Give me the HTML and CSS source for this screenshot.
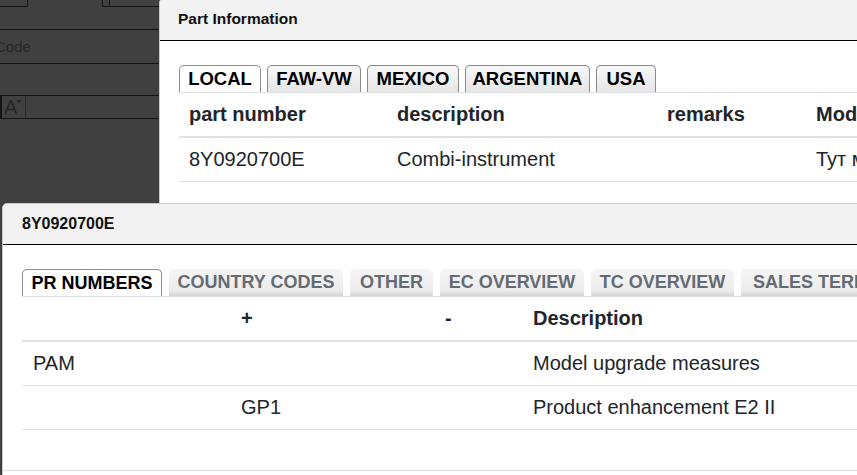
FILE: index.html
```html
<!DOCTYPE html>
<html lang="en">
<head>
<meta charset="utf-8">
<title>Part Information</title>
<link rel="stylesheet" href="styles.css">
</head>
<body>
<div class="backdrop">
  <div class="bg-top">
    <span class="bg-box bg-box-a"></span>
    <span class="bg-box bg-box-b"></span>
    <span class="bg-box bg-box-c"></span>
  </div>
  <div class="bg-row bg-row-code"><span class="bg-label">Code</span></div>
  <div class="bg-row bg-row-empty"></div>
  <div class="bg-row bg-row-tools"><span class="bg-tool">A<span class="bg-caret"></span></span></div>
</div>

<section class="dialog dialog-part">
  <header class="dialog-header"><h1 class="dialog-title">Part Information</h1></header>
  <div class="dialog-body">
    <nav class="tabs tabs-classic">
      <span class="tab tab-active w-local">LOCAL</span>
      <span class="tab w-faw">FAW-VW</span>
      <span class="tab w-mexico">MEXICO</span>
      <span class="tab w-argentina">ARGENTINA</span>
      <span class="tab w-usa">USA</span>
    </nav>
    <div class="grid-table part-table">
      <div class="trow thead">
        <span>part number</span><span>description</span><span>remarks</span><span>Model</span>
      </div>
      <div class="trow">
        <span>8Y0920700E</span><span>Combi-instrument</span><span></span><span>Тут модель</span>
      </div>
    </div>
  </div>
</section>

<section class="dialog dialog-pr">
  <header class="dialog-header"><h1 class="dialog-title">8Y0920700E</h1></header>
  <div class="dialog-body">
    <nav class="tabs tabs-flat">
      <span class="tab tab-active w-pr">PR NUMBERS</span>
      <span class="tab w-country">COUNTRY CODES</span>
      <span class="tab w-other">OTHER</span>
      <span class="tab w-ec">EC OVERVIEW</span>
      <span class="tab w-tc">TC OVERVIEW</span>
      <span class="tab w-sales">SALES TERMS</span>
    </nav>
    <div class="grid-table pr-table">
      <div class="trow thead">
        <span></span><span>+</span><span>-</span><span>Description</span>
      </div>
      <div class="trow">
        <span>PAM</span><span></span><span></span><span>Model upgrade measures</span>
      </div>
      <div class="trow">
        <span></span><span>GP1</span><span></span><span>Product enhancement E2 II</span>
      </div>
    </div>
  </div>
  <footer class="dialog-footer"></footer>
</section>
</body>
</html>
```

FILE: styles.css
```css
* { box-sizing: border-box; }

html, body {
  margin: 0;
  padding: 0;
}

body {
  width: 857px;
  height: 475px;
  overflow: hidden;
  position: relative;
  background: #404040;
  font-family: "Liberation Sans", Arial, sans-serif;
  color: #212529;
}

/* ---------- darkened page behind the dialogs ---------- */
.backdrop {
  width: 160px;
}

.bg-top {
  height: 30px;
  border-bottom: 1px solid #151515;
  display: flex;
  align-items: flex-start;
}

.bg-box {
  height: 7px;
  border: 1px solid #151515;
  border-top: none;
}

.bg-box-a {
  width: 30px;
  margin-left: -2px;
}

.bg-box-b {
  width: 8px;
  margin-left: 74px;
}

.bg-box-c {
  flex: 1;
  border-left: none;
  border-right: none;
}

.bg-row {
  border-bottom: 1px solid #151515;
  display: flex;
  align-items: center;
}

.bg-row-code { height: 34px; }
.bg-row-empty { height: 32px; }
.bg-row-tools { height: 23px; }

.bg-label {
  margin-left: -5px;
  font-size: 15px;
  color: #262626;
}

.bg-tool {
  height: 22px;
  width: 26px;
  border-left: 2px solid #151515;
  border-right: 1px solid #2a2a2a;
  position: relative;
  font-size: 20px;
  line-height: 22px;
  color: #262626;
  padding-left: 2px;
}

.bg-caret {
  position: absolute;
  right: 3px;
  top: 4px;
  border-left: 3px solid transparent;
  border-right: 3px solid transparent;
  border-top: 3px solid #262626;
}

/* ---------- dialogs ---------- */
.dialog {
  position: absolute;
  background: #fff;
  border: 1px solid #c9c9c9;
  border-radius: 6px 0 0 0;
  overflow: hidden;
}

.dialog-part {
  left: 159px;
  top: -3px;
  width: 760px;
  height: 300px;
}

.dialog-pr {
  left: 2px;
  top: 203px;
  width: 900px;
  height: 320px;
  border-radius: 5px 0 0 0;
}

.dialog-header {
  background: #f2f2f2;
  border-bottom: 1px solid #000;
  display: flex;
  align-items: center;
}

.dialog-part .dialog-header {
  height: 43px;
  padding-left: 18px;
}

.dialog-pr .dialog-header {
  height: 41px;
  padding-left: 19px;
}

.dialog-title {
  margin: 0;
  font-size: 15.5px;
  font-weight: bold;
  color: #111;
}

.dialog-pr .dialog-title {
  font-size: 16px;
}

.dialog-body {
  padding: 24px 0 0 19px;
}

.dialog-pr .dialog-body {
  padding-bottom: 40px;
}

.dialog-footer {
  border-top: 1px solid #dcdcdc;
  height: 30px;
}

/* ---------- tabs ---------- */
.tabs {
  display: flex;
  height: 27px;
}

.tabs-classic { gap: 6px; }
.tabs-flat { gap: 7px; }

.tab {
  flex: none;
  display: flex;
  align-items: center;
  justify-content: center;
  font-size: 18px;
  font-weight: bold;
  white-space: nowrap;
  border-radius: 5px 5px 0 0;
}

.tabs-classic .tab {
  font-size: 18.5px;
  border: 1px solid #8a8a8a;
  border-bottom: none;
  background: linear-gradient(#f7f7f7, #e6e6e6);
  color: #000;
}

.tabs-flat .tab {
  background: linear-gradient(#f5f5f5 0%, #ececec 80%, #d5d5d5 100%);
  color: #646b73;
}

.tabs .tab-active,
.tabs-flat .tab-active {
  background: #fff;
  color: #000;
  border: 1px solid #8e8e8e;
  border-bottom: none;
}

.w-local { width: 82px; }
.w-faw { width: 94px; }
.w-mexico { width: 92px; }
.w-argentina { width: 125px; }
.w-usa { width: 60px; }

.w-pr { width: 140px; }
.w-country { width: 174px; }
.w-other { width: 83px; }
.w-ec { width: 144px; }
.w-tc { width: 143px; }
.w-sales {
  justify-content: flex-start;
  padding: 0 12px;
}

/* ---------- tables ---------- */
.grid-table {
  border-top: 1px solid #dee2e6;
  font-size: 20px;
}

.trow {
  display: grid;
  align-items: center;
  height: 44px;
  border-bottom: 1px solid #dee2e6;
  white-space: nowrap;
}

.trow.thead {
  height: 45px;
  border-bottom-width: 2px;
  font-weight: bold;
}

.part-table .trow {
  grid-template-columns: 208px 270px 149px 1fr;
}

.part-table .trow span { padding-left: 10px; }

.pr-table .trow {
  grid-template-columns: 208px 204px 88px 1fr;
}

.pr-table .trow span { padding-left: 11px; }
```
